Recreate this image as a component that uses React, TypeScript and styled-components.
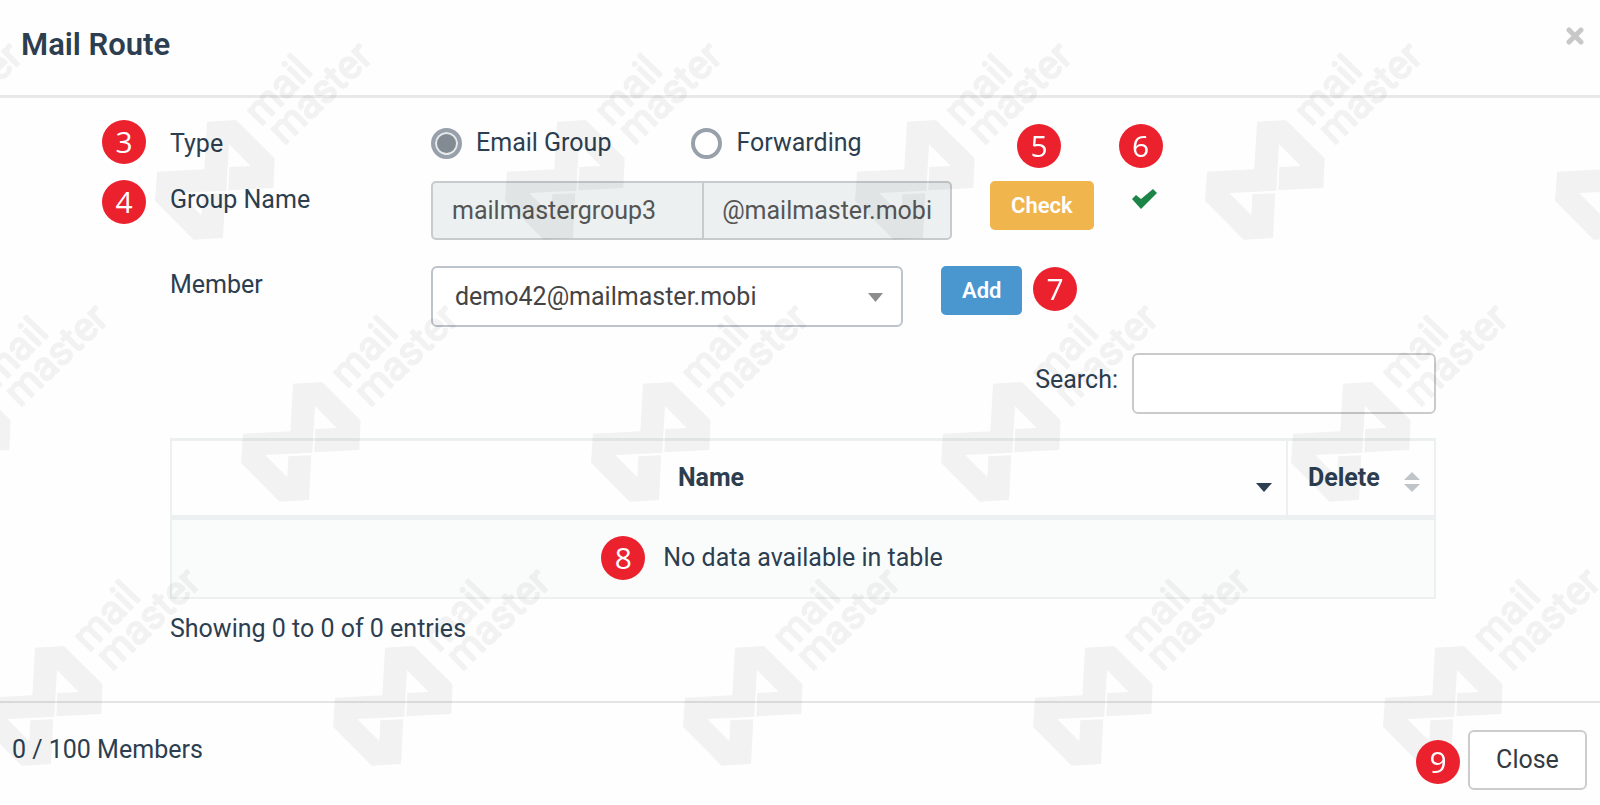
import React, { useState } from "react";
import styled, { createGlobalStyle } from "styled-components";

const ink = "#2c3e50";
const line = "#ecf0f1";

const GlobalStyle = createGlobalStyle`
  *, *::before, *::after { box-sizing: border-box; }
  body {
    margin: 0;
    background: #fefefe;
    color: ${ink};
    font-family: Roboto, "Liberation Sans", sans-serif;
    font-size: 25px;
    line-height: 32px;
  }
  button, input, select { font: inherit; color: inherit; margin: 0; }
  button { cursor: pointer; }
`;

const Dialog = styled.div`
  position: relative;
  display: flex;
  flex-direction: column;
  min-height: 100vh;
  overflow: hidden;
`;

const Header = styled.header`
  display: flex;
  justify-content: space-between;
  align-items: flex-start;
  padding: 25px 14px 30px 21px;
  border-bottom: 3px solid #e8e8e8;
`;

const Title = styled.h1`
  margin: 0;
  font-size: 31px;
  line-height: 40px;
  font-weight: 600;
`;

const Dismiss = styled.button`
  display: flex;
  padding: 2px;
  border: 0;
  background: none;
`;

const Body = styled.main`
  flex: 1;
  padding: 29px 164px 48px 170px;
`;

const Row = styled.div<{ $gap: number }>`
  display: grid;
  grid-template-columns: 261px 1fr;
  align-items: start;
  margin-bottom: ${(p) => p.$gap}px;
`;

const Label = styled.label<{ $top?: number }>`
  position: relative;
  justify-self: start;
  padding-top: ${(p) => p.$top ?? 0}px;
`;

const Controls = styled.div<{ $gap: number }>`
  display: flex;
  align-items: flex-start;
  gap: ${(p) => p.$gap}px;
`;

const Choice = styled.label`
  display: flex;
  align-items: center;
  gap: 14px;
`;

const Radio = styled.input`
  appearance: none;
  width: 31px;
  height: 31px;
  border: 4px solid #98a1ab;
  border-radius: 50%;
  background: #fff;

  &:checked {
    background: #828a92;
    box-shadow: inset 0 0 0 2px #e6e9eb;
  }
`;

const InputGroup = styled.div`
  display: flex;
  width: 521px;
  height: 59px;
  border: 2px solid #c8cbcc;
  border-radius: 5px;
  background: ${line};
  color: #555;
`;

const GroupInput = styled.input`
  flex: 1;
  min-width: 0;
  padding: 0 19px;
  border: 0;
  background: none;
`;

const Addon = styled.span`
  display: flex;
  align-items: center;
  padding: 0 18px;
  border-left: 2px solid #c8cbcc;
`;

const SelectBox = styled.div`
  position: relative;
  width: 472px;
`;

const Select = styled.select`
  appearance: none;
  width: 100%;
  height: 61px;
  padding: 0 22px;
  border: 2px solid #bdc3cb;
  border-radius: 6px;
  background: #fff;
  color: #444;
`;

const SelectCaret = styled.svg`
  position: absolute;
  right: 20px;
  top: 27px;
  pointer-events: none;
`;

const ActionButton = styled.button<{ $color: string }>`
  position: relative;
  height: 49px;
  padding: 0 21px;
  border: 0;
  border-radius: 5px;
  background: ${(p) => p.$color};
  color: #fff;
  font-size: 22px;
  font-weight: 600;
`;

const Status = styled.span`
  position: relative;
  display: flex;
  padding-top: 8px;
`;

const Badge = styled.span<{ $left: number; $top: number }>`
  position: absolute;
  z-index: 2;
  left: ${(p) => p.$left}px;
  top: ${(p) => p.$top}px;
  width: 44px;
  height: 44px;
  border-radius: 50%;
  background: #eb212e;
  color: #fff;
  font-family: "Open Sans", "Noto Sans", sans-serif;
  font-size: 30px;
  font-weight: 400;
  line-height: 44px;
  text-align: center;
`;

const SearchRow = styled.div`
  display: flex;
  justify-content: flex-end;
  gap: 14px;
  margin-bottom: 24px;
`;

const SearchInput = styled.input`
  width: 304px;
  height: 61px;
  padding: 0 20px;
  border: 2px solid #cacaca;
  border-radius: 6px;
  background: #fff;
`;

const Table = styled.table`
  width: 100%;
  border-collapse: collapse;
  border: 2px solid ${line};
  border-top-width: 3px;
`;

const HeadCell = styled.th<{ $width?: number }>`
  width: ${(p) => (p.$width ? `${p.$width}px` : "auto")};
  height: 78px;
  padding: 0;
  border-right: 2px solid ${line};
  border-bottom: 5px solid ${line};
`;

const SortButton = styled.button<{ $left: number }>`
  display: flex;
  align-items: center;
  gap: 6px;
  width: 100%;
  padding: 0 14px 0 ${(p) => p.$left}px;
  border: 0;
  background: none;
  font-weight: 700;

  span { flex: 1; text-align: ${(p) => (p.$left ? "left" : "center")}; }
  svg { margin-top: 8px; }
`;

const EmptyCell = styled.td`
  height: 80px;
  padding: 0;
  background: #fafcfc;
  text-align: center;
`;

const EmptyText = styled.span`
  position: relative;
`;

const Summary = styled.p`
  margin: 14px 0 0;
`;

const Footer = styled.footer`
  display: flex;
  justify-content: space-between;
  align-items: flex-start;
  padding: 27px 13px 15px 12px;
  border-top: 2px solid #e2e4e5;
`;

const Count = styled.span`
  padding-top: 4px;
`;

const CloseButton = styled.button`
  position: relative;
  width: 119px;
  height: 60px;
  border: 2px solid #ccc;
  border-radius: 6px;
  background: #fff;
  color: #333b42;
`;

const Watermark = styled.svg`
  position: absolute;
  z-index: 1;
  inset: 0;
  width: 100%;
  height: 100%;
  pointer-events: none;
`;

const markRows = [
  { x: -195, y: 120, count: 6 },
  { x: -109, y: 382, count: 5 },
  { x: -17, y: 646, count: 5 },
];

function Brand({ x, y }: { x: number; y: number }) {
  return (
    <g transform={`translate(${x} ${y})`} opacity="0.05">
      <path
        transform="scale(0.3333)"
        d="M6 155 148 148 156 5 243 0 359 115 355 204 220 211 223 141 287 138 222 72 214 212 73 219 139 286 142 223 211 220 204 354 116 359 0 242Z"
      />
      <g
        fontFamily="Roboto, sans-serif"
        fontSize="40"
        stroke="#000"
        strokeWidth="2"
        strokeLinejoin="round"
      >
        <text transform="translate(106 7) rotate(-46)">mail</text>
        <text transform="translate(129 26) rotate(-44)">master</text>
      </g>
    </g>
  );
}

export default function App() {
  const [type, setType] = useState("group");
  const [search, setSearch] = useState("");

  return (
    <>
      <GlobalStyle />
      <Dialog role="dialog" aria-labelledby="title">
        <Header>
          <Title id="title">Mail Route</Title>
          <Dismiss aria-label="Dismiss">
            <svg width="18" height="18" viewBox="0 0 18 18">
              <path d="M3 3 15 15M15 3 3 15" stroke="#c8c8c8" strokeWidth="5" strokeLinecap="round" />
            </svg>
          </Dismiss>
        </Header>

        <Body>
          <Row $gap={21} role="radiogroup" aria-labelledby="type-label">
            <Label as="span" id="type-label" $top={1}>
              Type
              <Badge $left={-68} $top={-7}>3</Badge>
            </Label>
            <Controls $gap={80}>
              <Choice>
                <Radio type="radio" name="type" checked={type === "group"} onChange={() => setType("group")} />
                Email Group
              </Choice>
              <Choice>
                <Radio type="radio" name="type" checked={type === "forward"} onChange={() => setType("forward")} />
                Forwarding
              </Choice>
            </Controls>
          </Row>

          <Row $gap={26}>
            <Label htmlFor="group-name" $top={3}>
              Group Name
              <Badge $left={-68} $top={-1}>4</Badge>
            </Label>
            <Controls $gap={38}>
              <InputGroup>
                <GroupInput id="group-name" disabled defaultValue="mailmastergroup3" />
                <Addon>@mailmaster.mobi</Addon>
              </InputGroup>
              <ActionButton $color="#f0b54c">
                Check
                <Badge $left={27} $top={-57}>5</Badge>
              </ActionButton>
              <Status role="img" aria-label="Available">
                <svg width="25" height="20" viewBox="0 0 25 20">
                  <path d="M0 10 4 6 9 10 21 0 25 4 9 20Z" fill="#1b8446" />
                </svg>
                <Badge $left={-13} $top={-57}>6</Badge>
              </Status>
            </Controls>
          </Row>

          <Row $gap={26}>
            <Label htmlFor="member" $top={3}>Member</Label>
            <Controls $gap={38}>
              <SelectBox>
                <Select id="member">
                  <option>demo42@mailmaster.mobi</option>
                </Select>
                <SelectCaret width="15" height="9" viewBox="0 0 15 9">
                  <path d="M0 0H15L7.500 9Z" fill="#8c8c8c" />
                </SelectCaret>
              </SelectBox>
              <ActionButton $color="#4a96cf">
                Add
                <Badge $left={92} $top={1}>7</Badge>
              </ActionButton>
            </Controls>
          </Row>

          <SearchRow>
            <Label htmlFor="search" $top={11}>Search:</Label>
            <SearchInput id="search" value={search} onChange={(e) => setSearch(e.target.value)} />
          </SearchRow>

          <Table>
            <thead>
              <tr>
                <HeadCell>
                  <SortButton $left={0}>
                    <span>Name</span>
                    <svg width="16" height="20" viewBox="0 0 16 20">
                      <path d="M0 11H16L8 20Z" fill={ink} />
                    </svg>
                  </SortButton>
                </HeadCell>
                <HeadCell $width={148}>
                  <SortButton $left={20}>
                    <span>Delete</span>
                    <svg width="16" height="20" viewBox="0 0 16 20">
                      <path d="M0 8H16L8 0ZM0 12H16L8 20Z" fill="#c0c5ca" />
                    </svg>
                  </SortButton>
                </HeadCell>
              </tr>
            </thead>
            <tbody>
              <tr>
                <EmptyCell colSpan={2}>
                  <EmptyText>
                    No data available in table
                    <Badge $left={-62} $top={-7}>8</Badge>
                  </EmptyText>
                </EmptyCell>
              </tr>
            </tbody>
          </Table>
          <Summary>Showing 0 to 0 of 0 entries</Summary>
        </Body>

        <Footer>
          <Count>0 / 100 Members</Count>
          <CloseButton>
            Close
            <Badge $left={-54} $top={8}>9</Badge>
          </CloseButton>
        </Footer>

        <Watermark aria-hidden="true">
          {markRows.map((row) =>
            Array.from({ length: row.count }, (_, column) => (
              <Brand key={`${row.y}-${column}`} x={row.x + column * 350} y={row.y} />
            )),
          )}
        </Watermark>
      </Dialog>
    </>
  );
}
